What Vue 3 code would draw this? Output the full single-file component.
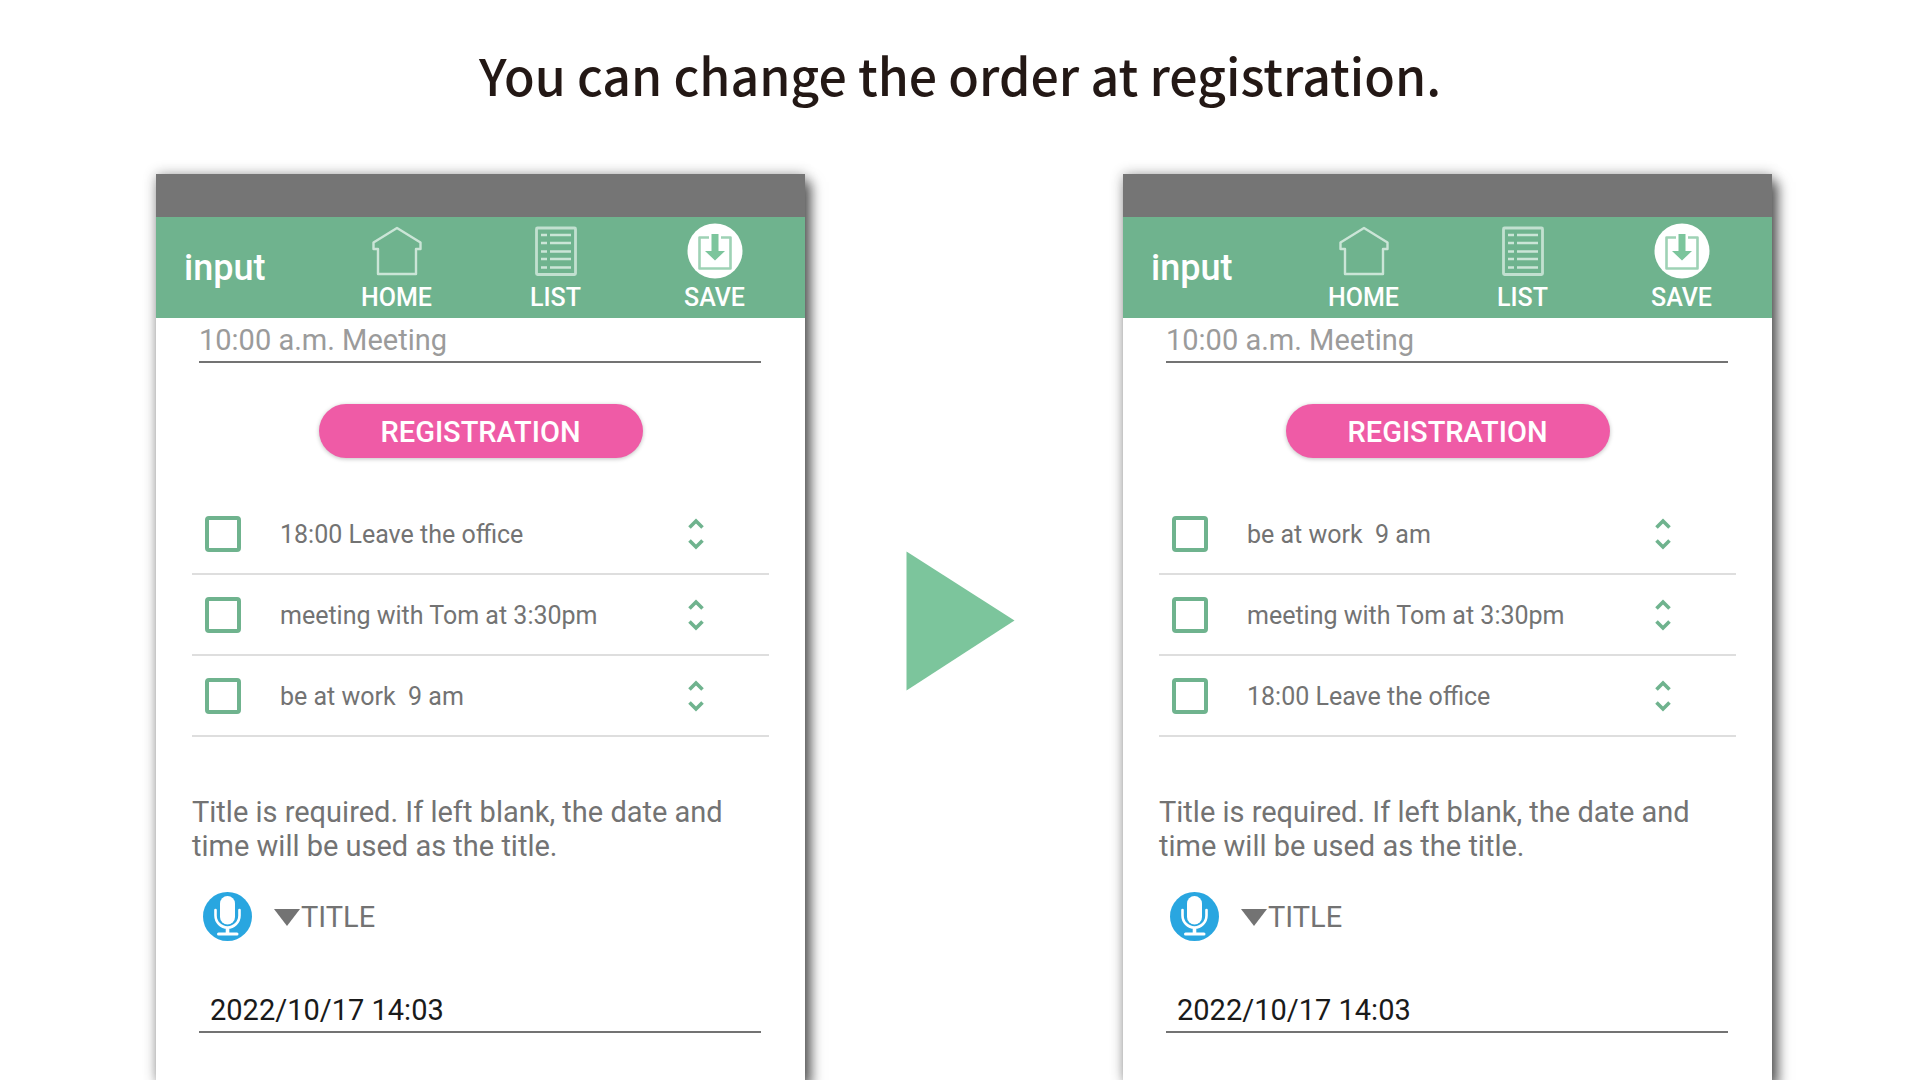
<template>
  <div class="page">
    <h1 class="headline">You can change the order at registration.</h1>

    <main class="compare">
      <template v-for="(screen, index) in screens" :key="screen.id">
        <!-- arrow between the two screens -->
        <div v-if="index > 0" class="arrow">
          <svg viewBox="0 0 109 140" aria-hidden="true">
            <path d="M0.5 0.5 L108.5 69.5 L0.5 139.5 Z" fill="#7cc59c" />
          </svg>
        </div>

        <section class="phone">
          <div class="status-bar"></div>

          <header class="app-bar">
            <h2 class="app-title">input</h2>
            <nav class="app-nav">
              <button type="button" class="nav-btn">
                <svg class="nav-icon" viewBox="0 0 56 56" aria-hidden="true">
                  <path
                    d="M28 5 L51.5 19.5 V26 H47 V51 H9 V26 H4.5 V19.5 Z"
                    fill="none"
                    stroke="#cbe5d7"
                    stroke-width="2.4"
                    stroke-linejoin="round"
                  />
                </svg>
                <span>HOME</span>
              </button>
              <button type="button" class="nav-btn">
                <svg class="nav-icon" viewBox="0 0 56 56" aria-hidden="true">
                  <rect x="8.5" y="5" width="39" height="46.5" rx="1" fill="none" stroke="#c2e0d0" stroke-width="2.8" />
                  <path
                    d="M13 12 H19 M22 12 H43 M13 20 H19 M22 20 H43 M13 28.5 H19 M22 28.5 H43 M13 36 H19 M22 36 H43 M13 44.5 H19 M22 44.5 H43"
                    stroke="#cbe5d7"
                    stroke-width="2.6"
                  />
                </svg>
                <span>LIST</span>
              </button>
              <button type="button" class="nav-btn">
                <svg class="nav-icon" viewBox="0 0 56 56" aria-hidden="true">
                  <circle cx="28" cy="28" r="27.5" fill="#fff" />
                  <path
                    d="M22 14.5 H12.5 V45.5 H43.5 V14.5 H34"
                    fill="none"
                    stroke="#9ed2b5"
                    stroke-width="2.6"
                    stroke-linejoin="round"
                  />
                  <path d="M24.5 11 H31.5 V28 H38 L28 37.5 L18 28 H24.5 Z" fill="#7cc59c" />
                </svg>
                <span>SAVE</span>
              </button>
            </nav>
          </header>

          <form class="content" @submit.prevent>
            <input
              class="field field-item"
              type="text"
              placeholder="10:00 a.m. Meeting"
              aria-label="Item"
            />

            <button type="submit" class="register-btn">REGISTRATION</button>

            <ul class="item-list">
              <li v-for="item in screen.items" :key="item" class="item">
                <label class="item-label">
                  <input type="checkbox" class="item-check" />
                  <span class="item-text">{{ item }}</span>
                </label>
                <button type="button" class="sort-btn" aria-label="Change order">
                  <svg viewBox="0 0 16 34" aria-hidden="true">
                    <path
                      d="M1.5 10.5 L8 4 L14.5 10.5 M1.5 23.5 L8 30 L14.5 23.5"
                      fill="none"
                      stroke="#6fb38e"
                      stroke-width="3.6"
                    />
                  </svg>
                </button>
              </li>
            </ul>

            <p class="note">
              Title is required. If left blank, the date and time will be used as the title.
            </p>

            <div class="title-row">
              <button type="button" class="mic-btn" aria-label="Voice input">
                <svg viewBox="0 0 49 49" aria-hidden="true">
                  <circle cx="24.5" cy="24.5" r="24.5" fill="#29a6e0" />
                  <rect x="17" y="4" width="15" height="28.5" rx="7.5" fill="#fff" />
                  <path
                    d="M12.5 18 V23.5 A12 12 0 0 0 36.5 23.5 V18"
                    fill="none"
                    stroke="#fff"
                    stroke-width="2.6"
                    stroke-linecap="round"
                  />
                  <path d="M24.5 35.5 V42" stroke="#fff" stroke-width="3.6" />
                  <path d="M15.5 42 H34" stroke="#fff" stroke-width="3" stroke-linecap="round" />
                </svg>
              </button>
              <label class="title-label" :for="`title-${screen.id}`">
                <span class="triangle"></span>TITLE
              </label>
            </div>

            <input
              :id="`title-${screen.id}`"
              v-model="screen.title"
              class="field field-title"
              type="text"
            />
          </form>
        </section>
      </template>
    </main>
  </div>
</template>

<script setup>
import { reactive } from 'vue'

// the same screen before and after reordering
const screens = reactive([
  {
    id: 'before',
    title: '2022/10/17 14:03',
    items: ['18:00 Leave the office', 'meeting with Tom at 3:30pm', 'be at work  9 am']
  },
  {
    id: 'after',
    title: '2022/10/17 14:03',
    items: ['be at work  9 am', 'meeting with Tom at 3:30pm', '18:00 Leave the office']
  }
])
</script>

<style>
body {
  background: #fff;
}
</style>

<style scoped>
.page {
  display: flex;
  flex-direction: column;
  min-height: 100vh;
  box-sizing: border-box;
  font-family: Roboto, sans-serif;
  color: #737373;
}

.page button {
  padding: 0;
  border: none;
  background: none;
  font-family: inherit;
  cursor: pointer;
}

.page svg {
  display: block;
  width: 100%;
  height: 100%;
}

.headline {
  margin: 0;
  padding: 34px 0 60px;
  font-family: 'Noto Sans CJK JP', sans-serif;
  font-size: 50px;
  font-weight: 500;
  line-height: 80px;
  text-align: center;
  color: #231815;
}

.compare {
  flex: 1;
  display: grid;
  grid-template-columns: 1fr 318px 1fr;
  padding: 0 148px 0 156px;
}

.arrow {
  justify-self: center;
  width: 109px;
  height: 140px;
  margin: 377px 8px 0 0;
}

.phone {
  background: #fff;
  box-shadow: 0 0 12px rgba(0, 0, 0, 0.3), 6px 8px 12px rgba(0, 0, 0, 0.6);
}

.status-bar {
  height: 43px;
  background: #757575;
}

.app-bar {
  display: flex;
  align-items: center;
  justify-content: space-between;
  height: 101px;
  padding: 0 11px 0 28px;
  background: #6fb38e;
  color: #fff;
}

.app-title {
  margin: 0;
  font-size: 36px;
  font-weight: 500;
}

.app-nav {
  display: flex;
}

.nav-btn {
  display: flex;
  flex-direction: column;
  align-items: center;
  gap: 4px;
  width: 159px;
  font-size: 25px;
  font-weight: 500;
  line-height: 30px;
  color: #fff;
}

.page .nav-icon {
  width: 56px;
  height: 56px;
}

.content {
  display: flex;
  flex-direction: column;
  padding: 0 36px;
}

.field {
  box-sizing: border-box;
  margin: 0 8px 0 7px;
  border: none;
  border-bottom: 2px solid #737373;
  border-radius: 0;
  outline: none;
  background: none;
  font-family: inherit;
  font-size: 29px;
  color: #1a1a1a;
}

.field::placeholder {
  color: #9b9b9b;
  opacity: 1;
}

.field-item {
  height: 45px;
  padding: 0;
}

.field-title {
  height: 44px;
  margin-top: 48px;
  padding: 0 11px;
}

.page .register-btn {
  align-self: center;
  width: 324px;
  height: 54px;
  margin-top: 41px;
  padding-top: 1px;
  border-radius: 27px;
  background: #ef5ba6;
  box-shadow: 0 1px 4px rgba(0, 0, 0, 0.25);
  font-size: 29px;
  font-weight: 500;
  color: #fff;
}

.item-list {
  margin: 36px 0 0;
  padding: 0;
  list-style: none;
}

.item {
  display: flex;
  align-items: center;
  box-sizing: border-box;
  height: 81px;
  padding: 0 65px 0 13px;
  border-bottom: 2px solid #dedede;
}

.item-label {
  flex: 1;
  display: flex;
  align-items: center;
  gap: 39px;
  font-size: 25px;
  white-space: pre;
}

.item-check {
  appearance: none;
  box-sizing: border-box;
  width: 36px;
  height: 36px;
  margin: 0;
  border: 4px solid #6fb38e;
  border-radius: 4px;
}

.item-text {
  padding-top: 2px;
}

.sort-btn {
  width: 16px;
  height: 34px;
}

.note {
  margin: 58px 0 0;
  font-size: 29px;
  line-height: 34px;
}

.title-row {
  display: flex;
  align-items: center;
  gap: 22px;
  margin-top: 29px;
  padding-left: 11px;
}

.mic-btn {
  width: 49px;
  height: 49px;
}

.title-label {
  display: flex;
  align-items: center;
  gap: 1px;
  padding-top: 1px;
  font-size: 29px;
}

.triangle {
  border-top: 17px solid #737373;
  border-right: 13px solid transparent;
  border-left: 13px solid transparent;
}
</style>
